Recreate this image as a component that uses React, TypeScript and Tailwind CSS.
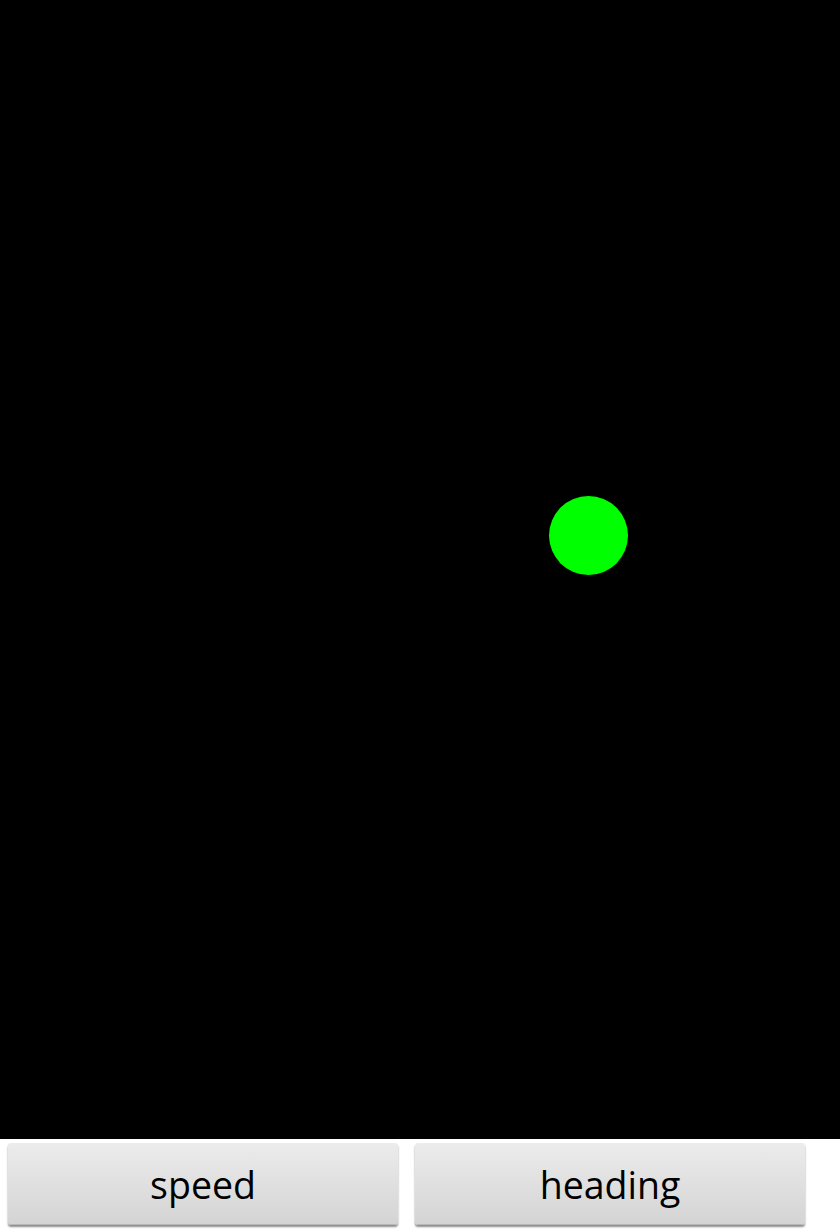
import React from "react";

export default function App() {
  return (
    <div className="w-[840px] h-[1232px] bg-white flex flex-col overflow-hidden" style={{ fontFamily: '"Open Sans", "Noto Sans", sans-serif' }}>
      <div className="relative h-[1139px] w-full bg-black shrink-0">
        <div className="absolute left-[549px] top-[496px] w-[79px] h-[79px] rounded-full bg-[#00ff00]" />
      </div>
      <div className="flex gap-[17px] pl-[8px] pt-[4px]">
        <button className="w-[390px] h-[82px] rounded-[3px] bg-gradient-to-b from-[#ececec] to-[#d4d4d4] shadow-[0_2px_2px_rgba(0,0,0,0.45)] border-b border-[#b8b8b8] text-[37.5px] leading-none pt-[2px] text-black flex items-center justify-center">
          speed
        </button>
        <button className="w-[390px] h-[82px] rounded-[3px] bg-gradient-to-b from-[#ececec] to-[#d4d4d4] shadow-[0_2px_2px_rgba(0,0,0,0.45)] border-b border-[#b8b8b8] text-[37.5px] leading-none pt-[2px] text-black flex items-center justify-center">
          heading
        </button>
      </div>
    </div>
  );
}
